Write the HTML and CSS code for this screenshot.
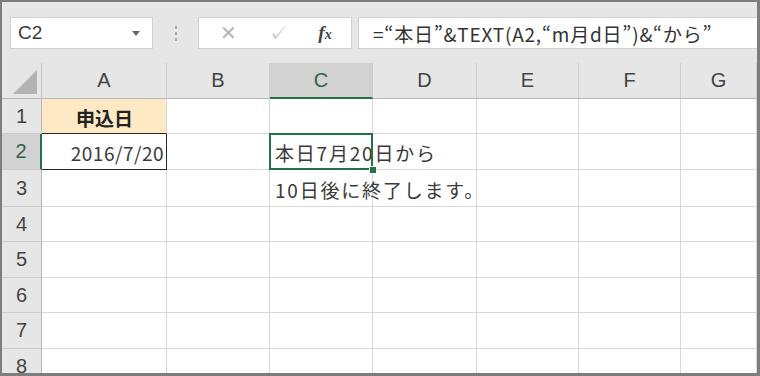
FILE: index.html
```html
<!DOCTYPE html>
<html lang="ja">
<head>
    <meta charset="UTF-8">
    <title>TEXT関数</title>
    <link rel="stylesheet" href="styles.css">
</head>
<body>
<div class="window">
    <div class="formula-bar">
        <div class="name-box">
            <span>C2</span>
            <span class="arrow"></span>
        </div>
        <div class="grip"><i></i><i></i><i></i></div>
        <div class="fx-buttons">
            <span class="cancel">✕</span>
            <span class="enter">✓</span>
            <span class="fx">f<small>x</small></span>
        </div>
        <div class="formula">=“本日”&amp;TEXT(A2,“m月d日”)&amp;“から”</div>
    </div>

    <div class="sheet">
        <div class="corner"><span class="tri"></span></div>
        <div class="col-head">A</div>
        <div class="col-head">B</div>
        <div class="col-head active">C</div>
        <div class="col-head">D</div>
        <div class="col-head">E</div>
        <div class="col-head">F</div>
        <div class="col-head">G</div>

        <div class="row-head">1</div>
        <div class="cell title">申込日</div>
        <div class="cell"></div>
        <div class="cell"></div>
        <div class="cell"></div>
        <div class="cell"></div>
        <div class="cell"></div>
        <div class="cell"></div>

        <div class="row-head active">2</div>
        <div class="cell date">2016/7/20</div>
        <div class="cell"></div>
        <div class="cell text selected">本日7月20日から</div>
        <div class="cell"></div>
        <div class="cell"></div>
        <div class="cell"></div>
        <div class="cell"></div>

        <div class="row-head">3</div>
        <div class="cell"></div>
        <div class="cell"></div>
        <div class="cell text">10日後に終了します。</div>
        <div class="cell"></div>
        <div class="cell"></div>
        <div class="cell"></div>
        <div class="cell"></div>

        <div class="row-head">4</div>
        <div class="cell"></div><div class="cell"></div><div class="cell"></div><div class="cell"></div>
        <div class="cell"></div><div class="cell"></div><div class="cell"></div>

        <div class="row-head">5</div>
        <div class="cell"></div><div class="cell"></div><div class="cell"></div><div class="cell"></div>
        <div class="cell"></div><div class="cell"></div><div class="cell"></div>

        <div class="row-head">6</div>
        <div class="cell"></div><div class="cell"></div><div class="cell"></div><div class="cell"></div>
        <div class="cell"></div><div class="cell"></div><div class="cell"></div>

        <div class="row-head">7</div>
        <div class="cell"></div><div class="cell"></div><div class="cell"></div><div class="cell"></div>
        <div class="cell"></div><div class="cell"></div><div class="cell"></div>

        <div class="row-head">8</div>
        <div class="cell"></div><div class="cell"></div><div class="cell"></div><div class="cell"></div>
        <div class="cell"></div><div class="cell"></div><div class="cell"></div>
    </div>
</div>
</body>
</html>
```

FILE: styles.css
```css
body {
    margin: 0;
    background-color: #7d7d7d;
    font-family: "Liberation Sans", Arial, sans-serif;
}

.window {
    margin: 2px 3px 3px 2px;
    width: 755px;
    height: 371px;
    overflow: hidden;
    background-color: #e6e6e6;
}

/* formula bar */
.formula-bar {
    height: 61px;
    box-sizing: border-box;
    padding: 15px 0 0 8px;
    display: flex;
    align-items: flex-start;
}

.name-box,
.fx-buttons,
.formula {
    height: 32px;
    box-sizing: border-box;
    background-color: #fff;
    border: 1px solid #d2d2d2;
    display: flex;
    align-items: center;
}

.name-box {
    width: 143px;
    padding: 0 0 0 7px;
    justify-content: space-between;
    font-size: 19px;
    color: #3a3a3a;
}

.name-box .arrow {
    width: 0;
    height: 0;
    margin-right: 12px;
    border-left: 4px solid transparent;
    border-right: 4px solid transparent;
    border-top: 5px solid #666;
}

.grip {
    width: 45px;
    height: 32px;
    display: flex;
    flex-direction: column;
    align-items: center;
    justify-content: center;
    gap: 3px;
}

.grip i {
    width: 2px;
    height: 3px;
    background-color: #a8a8a8;
}

.fx-buttons {
    width: 154px;
    justify-content: space-around;
    padding: 0 4px 0 6px;
}

.cancel {
    font-size: 20px;
    color: #b4b4b4;
}

.enter {
    font-size: 20px;
    color: #c4c4c4;
}

.fx {
    font-family: "Liberation Serif", serif;
    font-style: italic;
    font-weight: bold;
    font-size: 19px;
    color: #444;
}

.fx small {
    font-size: 14px;
}

.formula {
    flex: 1;
    margin-left: 6px;
    border-right: none;
    padding-left: 14px;
    font-family: "Noto Sans CJK JP", sans-serif;
    font-size: 19px;
    letter-spacing: 0.8px;
    color: #333;
    white-space: nowrap;
}

/* sheet grid */
.sheet {
    display: grid;
    grid-template-columns: 40px 125px 103px 103px 104px 102px 102px 76px;
    grid-template-rows: 36px 35px 36px 37px 35px 36px 35px 36px 36px;
    background-color: #fff;
}

.corner,
.col-head,
.row-head {
    background-color: #e6e6e6;
    box-sizing: border-box;
    display: flex;
    align-items: center;
    justify-content: center;
    font-size: 20px;
    color: #444;
}

.corner {
    border-right: 1px solid #c8c8c8;
    border-bottom: 1px solid #b8b8b8;
    align-items: flex-end;
    justify-content: flex-end;
    padding: 0 4px 4px 0;
}

.corner .tri {
    width: 0;
    height: 0;
    border-left: 24px solid transparent;
    border-bottom: 24px solid #b3b3b3;
}

.col-head {
    border-right: 1px solid #cdcdcd;
    border-bottom: 1px solid #b8b8b8;
}

.col-head.active {
    background-color: #d2d2d2;
    border-bottom: 2px solid #217346;
    color: #356146;
}

.row-head {
    border-right: 1px solid #b8b8b8;
    border-bottom: 1px solid #cdcdcd;
}

.row-head.active {
    background-color: #d2d2d2;
    border-right: 2px solid #217346;
    color: #356146;
}

.cell {
    box-sizing: border-box;
    border-right: 1px solid #d8d8d8;
    border-bottom: 1px solid #d8d8d8;
    display: flex;
    align-items: center;
    padding: 2px 4px 0 5px;
    font-family: "Noto Sans CJK JP", sans-serif;
    font-size: 19px;
    color: #3a3a3a;
    white-space: nowrap;
}

.cell.title {
    background-color: #fde9c4;
    justify-content: center;
    font-weight: bold;
    color: #222;
    border-bottom-color: #2a2a2a;
}

.cell.date {
    justify-content: flex-end;
    padding-right: 2px;
    letter-spacing: 0.5px;
    border-right-color: #2a2a2a;
    border-bottom-color: #2a2a2a;
}

.cell.text {
    overflow: visible;
    letter-spacing: 1.8px;
}

.cell.selected {
    position: relative;
}

.cell.selected::after {
    content: "";
    position: absolute;
    top: -1px;
    left: -1px;
    right: -1px;
    bottom: -1px;
    border: 2px solid #217346;
}

.cell.selected::before {
    content: "";
    position: absolute;
    right: -5px;
    bottom: -5px;
    width: 6px;
    height: 6px;
    background-color: #217346;
    border: 1px solid #fff;
    z-index: 1;
}
```
